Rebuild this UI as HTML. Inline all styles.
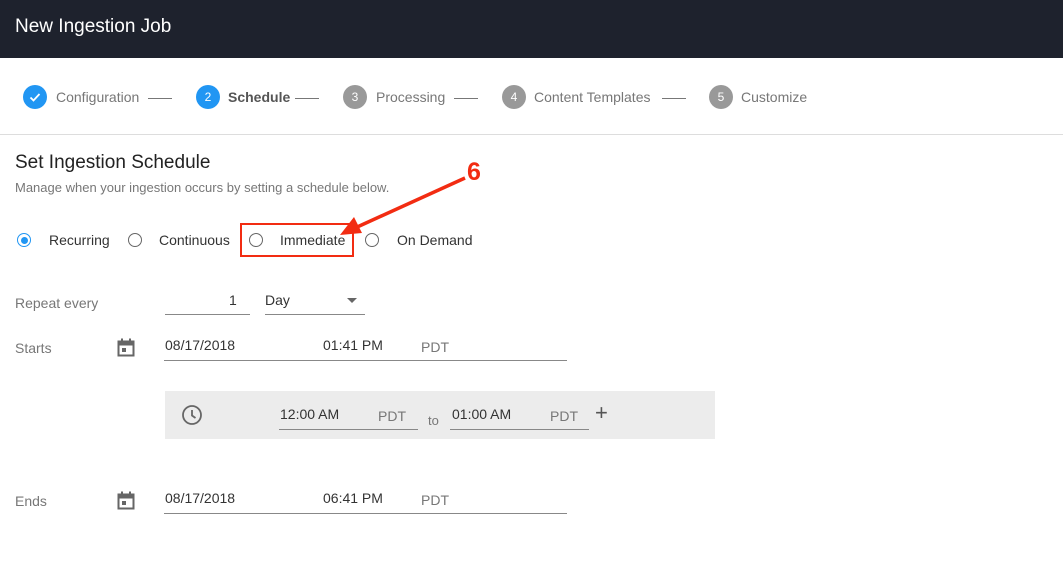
<!DOCTYPE html><html><head><style>
body{margin:0;width:1063px;height:574px;background:#fff;font-family:"Liberation Sans",sans-serif;position:relative;overflow:hidden;color:#333}
.a{position:absolute;white-space:nowrap}
.c{position:absolute;width:24px;height:24px;border-radius:50%;color:#fff;font-size:12px;text-align:center;line-height:24px}
.l{position:absolute;height:1px;background:#777}
.r{position:absolute;width:12px;height:12px;border:1.5px solid #666;border-radius:50%}
.u{position:absolute;height:1px;background:#888}
.g{color:#777}
</style></head><body>
<div class="a" style="left:0;top:0;width:1063px;height:58px;background:#1e222d"></div>
<div class="a" style="left:15px;top:16px;font-size:19px;color:#fff">New Ingestion Job</div>
<div class="c" style="left:23px;top:85px;background:#2196f3"><svg width="24" height="24"><path d="M7.5 12.5l3 3 6-6.5" stroke="#fff" stroke-width="1.8" fill="none"/></svg></div>
<div class="a g" style="left:56px;top:89px;font-size:14px">Configuration</div><div class="l" style="left:148px;top:98px;width:24px"></div>
<div class="c" style="left:196px;top:85px;background:#2196f3">2</div>
<div class="a" style="left:228px;top:89px;font-size:14px;font-weight:bold;color:#555">Schedule</div><div class="l" style="left:295px;top:98px;width:24px"></div>
<div class="c" style="left:343px;top:85px;background:#999">3</div>
<div class="a g" style="left:376px;top:89px;font-size:14px">Processing</div><div class="l" style="left:454px;top:98px;width:24px"></div>
<div class="c" style="left:502px;top:85px;background:#999">4</div>
<div class="a g" style="left:534px;top:89px;font-size:14px">Content Templates</div><div class="l" style="left:662px;top:98px;width:24px"></div>
<div class="c" style="left:709px;top:85px;background:#999">5</div>
<div class="a g" style="left:741px;top:89px;font-size:14px">Customize</div>
<div class="a" style="left:0;top:134px;width:1063px;height:1px;background:#ddd"></div>
<div class="a" style="left:15px;top:152px;font-size:19px;color:#222">Set Ingestion Schedule</div>
<div class="a g" style="left:15px;top:180px;font-size:13px">Manage when your ingestion occurs by setting a schedule below.</div>
<div class="r" style="left:17px;top:233px;border-color:#2196f3"><div style="position:absolute;left:2.5px;top:2.5px;width:7px;height:7px;border-radius:50%;background:#2196f3"></div></div>
<div class="a" style="left:49px;top:232px;font-size:14px">Recurring</div>
<div class="r" style="left:128px;top:233px"></div><div class="a" style="left:159px;top:232px;font-size:14px">Continuous</div>
<div class="r" style="left:249px;top:233px"></div><div class="a" style="left:280px;top:232px;font-size:14px">Immediate</div>
<div class="r" style="left:365px;top:233px"></div><div class="a" style="left:397px;top:232px;font-size:14px">On Demand</div>
<div class="a" style="left:240px;top:223px;width:110px;height:30px;border:2.5px solid #f22c12"></div>
<svg class="a" style="left:0;top:0" width="1063" height="574"><path d="M465 178L355 228" stroke="#f22c12" stroke-width="3.5"/><path d="M340 235l14-18 8 16z" fill="#f22c12"/></svg>
<div class="a" style="left:467px;top:158px;font-size:25px;font-weight:bold;color:#f22c12">6</div>
<div class="a g" style="left:15px;top:295px;font-size:14px">Repeat every</div>
<div class="a" style="left:229px;top:292px;font-size:14px">1</div><div class="u" style="left:165px;top:314px;width:85px"></div>
<div class="a" style="left:265px;top:292px;font-size:14px">Day</div><div class="a" style="left:347px;top:298px;border:5px solid transparent;border-top-color:#666;border-bottom:0"></div><div class="u" style="left:265px;top:314px;width:100px"></div>
<div class="a g" style="left:15px;top:340px;font-size:14px">Starts</div>
<svg class="a" style="left:117px;top:338px" width="20" height="20"><rect x="1.5" y="3.5" width="15" height="14" fill="none" stroke="#666" stroke-width="2"/><rect x="1.5" y="3.5" width="15" height="4" fill="#666"/><rect x="4" y="0.5" width="2" height="4" fill="#666"/><rect x="12" y="0.5" width="2" height="4" fill="#666"/><rect x="5" y="10" width="4" height="4" fill="#666"/></svg>
<div class="a" style="left:165px;top:337px;font-size:14px">08/17/2018</div><div class="a" style="left:323px;top:337px;font-size:14px">01:41 PM</div><div class="a g" style="left:421px;top:339px;font-size:14px">PDT</div><div class="u" style="left:164px;top:360px;width:403px"></div>
<div class="a" style="left:165px;top:391px;width:550px;height:48px;background:#ececec"></div>
<svg class="a" style="left:181px;top:404px" width="22" height="22"><circle cx="11" cy="11" r="9" fill="none" stroke="#666" stroke-width="1.8"/><path d="M11 6v5.5l3.5 2.5" stroke="#666" stroke-width="1.8" fill="none"/></svg>
<div class="a" style="left:280px;top:406px;font-size:14px">12:00 AM</div><div class="a g" style="left:378px;top:408px;font-size:14px">PDT</div><div class="u" style="left:279px;top:429px;width:139px"></div>
<div class="a g" style="left:428px;top:413px;font-size:13px">to</div>
<div class="a" style="left:452px;top:406px;font-size:14px">01:00 AM</div><div class="a g" style="left:550px;top:408px;font-size:14px">PDT</div><div class="u" style="left:450px;top:429px;width:139px"></div>
<div class="a" style="left:595px;top:400px;font-size:22px;color:#555">+</div>
<div class="a g" style="left:15px;top:493px;font-size:14px">Ends</div>
<svg class="a" style="left:117px;top:491px" width="20" height="20"><rect x="1.5" y="3.5" width="15" height="14" fill="none" stroke="#666" stroke-width="2"/><rect x="1.5" y="3.5" width="15" height="4" fill="#666"/><rect x="4" y="0.5" width="2" height="4" fill="#666"/><rect x="12" y="0.5" width="2" height="4" fill="#666"/><rect x="5" y="10" width="4" height="4" fill="#666"/></svg>
<div class="a" style="left:165px;top:490px;font-size:14px">08/17/2018</div><div class="a" style="left:323px;top:490px;font-size:14px">06:41 PM</div><div class="a g" style="left:421px;top:492px;font-size:14px">PDT</div><div class="u" style="left:164px;top:513px;width:403px"></div>
</body></html>
